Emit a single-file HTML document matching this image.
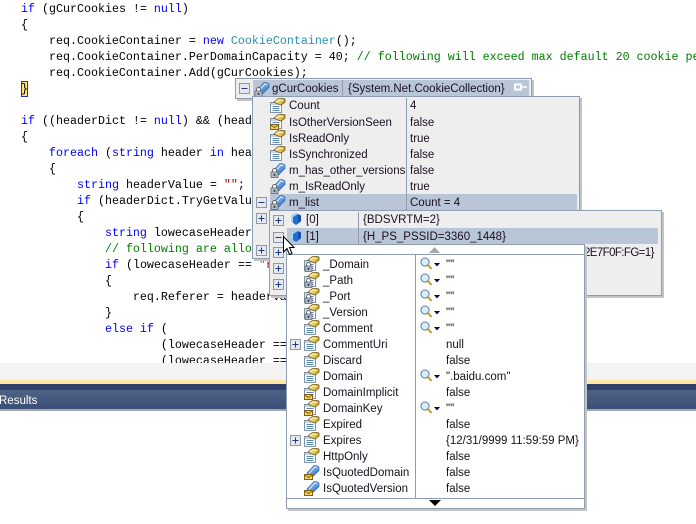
<!DOCTYPE html>
<html><head><meta charset="utf-8">
<style>
html,body{margin:0;padding:0;background:#fff;width:696px;height:524px;overflow:hidden}
#root{position:relative;width:696px;height:524px;overflow:hidden;background:#fff}
.abs{position:absolute}
.code{position:absolute;left:0;top:0;width:696px;height:363px;overflow:hidden;font:11.67px/16px "Liberation Mono",monospace;color:#000;white-space:pre}
.code div{position:absolute;left:21px;height:16px;white-space:pre;margin-top:1px}
.k{color:#0000ff}.t{color:#2b91af}.c{color:#008000}.s{color:#a31515}
.box{position:absolute;background:#eeeeee;border:1px solid #8f9db2;box-sizing:border-box;box-shadow:2px 2px 0 #c4c4c4}
.tx{position:absolute;font:11.5px/16px "Liberation Sans",sans-serif;color:#1a1020;white-space:pre;height:16px;margin-top:1px}
.hl{position:absolute;background:#b9c6d8}
.ln{position:absolute;background:#8f9db2}
svg.i{position:absolute;width:16px;height:16px;overflow:visible}
svg.e{position:absolute;width:11px;height:11px}
</style></head><body><div id="root">
<svg width="0" height="0" style="position:absolute">
<defs>
<linearGradient id="bl" x1="0" y1="0" x2="1" y2="1"><stop offset="0" stop-color="#a8d0f4"/><stop offset="1" stop-color="#1d66c4"/></linearGradient>
<linearGradient id="yl" x1="0" y1="0" x2="1" y2="0"><stop offset="0" stop-color="#fff0a0"/><stop offset="1" stop-color="#d8a010"/></linearGradient>
<symbol id="prop" viewBox="0 1 16 16"><rect x="0.5" y="5.5" width="11" height="10" fill="#fff" stroke="#7f93a8"/><rect x="1" y="6" width="10" height="2" fill="#c4d4e4"/><path d="M2.5 9.5h7M2.5 11.5h7M2.5 13.5h7" stroke="#5b86b8" stroke-width="1"/><path d="M4 5L9 1l6 1v3l-4 3-3-1z" fill="url(#yl)" stroke="#6e5a18" stroke-width=".8"/><path d="M6 5l3-2 4 .5" stroke="#fff7c8" fill="none"/></symbol>
<symbol id="field" viewBox="0 0 16 16"><path d="M3 9L10 1.500h2.500L15 3v3.500L8 13.500 5 13z" fill="url(#bl)" stroke="#2a5fa8" stroke-width=".6"/><path d="M5 9.500l6-6.500 2.500 1" stroke="#d8ecff" fill="none"/></symbol>
<symbol id="lock" viewBox="0 0 16 16"><path d="M2.500 10V8.500a2 2 0 0 1 4 0V10" stroke="#666" fill="#fff"/><rect x="1" y="10" width="7" height="5.500" fill="#b5bcc6" stroke="#5d6670" stroke-width=".8"/><rect x="3.500" y="11.800" width="2" height="2" fill="#39424c"/></symbol>
<symbol id="env" viewBox="0 0 16 16"><rect x="0.500" y="10.500" width="8" height="5" fill="#f4d060" stroke="#80641a"/><path d="M1 11l3.500 2.500L8 11" stroke="#80641a" fill="none"/></symbol>
<symbol id="cube" viewBox="0 0 16 16"><path d="M8 2l5 2.500v6L8 14 3 10.500v-6z" fill="#1f6ed0"/><path d="M3 4.500L8 2l2 1-5 3v6l-2-1.500z" fill="#a8d4f8"/><path d="M10 3.500l3 1v5l-3 2.500z" fill="#0f50a8"/></symbol>
<symbol id="plus" viewBox="0 0 11 11"><rect x=".5" y=".5" width="10" height="10" fill="#e6e8ee" stroke="#8d99a8"/><path d="M2.500 5.500h6M5.500 2.500v6" stroke="#1f3a80"/></symbol>
<symbol id="minus" viewBox="0 0 11 11"><rect x=".5" y=".5" width="10" height="10" fill="#e6e8ee" stroke="#8d99a8"/><path d="M2.500 5.500h6" stroke="#1f3a80"/></symbol>
<symbol id="mag" viewBox="0 0 22 16"><circle cx="6" cy="6" r="4" fill="#dcefff" stroke="#7b96b4" stroke-width="1.300"/><path d="M9 9l3.500 4" stroke="#c59a2a" stroke-width="2"/><path d="M15 7h6l-3 3.500z" fill="#00007e"/></symbol>
</defs>
</svg>

<div class="code">
<div style="top:0"><span class="k">if</span> (gCurCookies != <span class="k">null</span>)</div>
<div style="top:16px">{</div>
<div style="top:32px">    req.CookieContainer = <span class="k">new</span> <span class="t">CookieContainer</span>();</div>
<div style="top:48px">    req.CookieContainer.PerDomainCapacity = 40; <span class="c">// following will exceed max default 20 cookie per domain</span></div>
<div style="top:64px">    req.CookieContainer.Add(gCurCookies);</div>
<div style="top:80px;left:21px;width:7px;background:#ffe780;outline:1px solid #2030d0;outline-offset:-1px;height:16px">}</div>
<div style="top:112px"><span class="k">if</span> ((headerDict != <span class="k">null</span>) &amp;&amp; (headerDict.Count &gt; 0))</div>
<div style="top:128px">{</div>
<div style="top:144px">    <span class="k">foreach</span> (<span class="k">string</span> header <span class="k">in</span> headerDict.Keys)</div>
<div style="top:160px">    {</div>
<div style="top:176px">        <span class="k">string</span> headerValue = <span class="s">""</span>;</div>
<div style="top:192px">        <span class="k">if</span> (headerDict.TryGetValue(header, <span class="k">out</span> headerValue))</div>
<div style="top:208px">        {</div>
<div style="top:224px">            <span class="k">string</span> lowecaseHeader = header.ToLower();</div>
<div style="top:240px">            <span class="c">// following are allowed</span></div>
<div style="top:256px">            <span class="k">if</span> (lowecaseHeader == <span class="s">"referer"</span>)</div>
<div style="top:272px">            {</div>
<div style="top:288px">                req.Referer = headerValue;</div>
<div style="top:304px">            }</div>
<div style="top:320px">            <span class="k">else if</span> (</div>
<div style="top:336px">                    (lowecaseHeader == <span class="s">"a"</span>)</div>
<div style="top:352px">                    (lowecaseHeader == <span class="s">"b"</span>)</div>
</div>

<div class="abs" style="left:0;top:363px;width:696px;height:17px;background:#f3f3f3"></div>
<div class="abs" style="left:0;top:380px;width:696px;height:4px;background:#ffe8a6"></div>
<div class="abs" style="left:0;top:384px;width:696px;height:6px;background:#2f4169"></div>
<div class="abs" style="left:0;top:390px;width:696px;height:19px;background:linear-gradient(#4f6286,#3b5077)"></div>
<div class="abs" style="left:0;top:409px;width:696px;height:2px;background:#a6a6a6"></div>
<div class="tx" style="left:-1px;top:392px;color:#fff">Results</div>

<!-- popup 1 header -->
<div class="box" style="left:235px;top:78px;width:297px;height:21px"></div>
<div class="hl" style="left:253px;top:80px;width:276px;height:17px"></div>
<div class="ln" style="left:342px;top:80px;width:1px;height:17px"></div>
<svg class="e" style="left:239px;top:83px"><use href="#minus"/></svg>
<svg class="i" style="left:254px;top:81px"><use href="#field"/></svg>
<svg class="i" style="left:254px;top:81px"><use href="#lock"/></svg>
<div class="tx" style="left:272px;top:80px">gCurCookies</div>
<div class="tx" style="left:348px;top:80px">{System.Net.CookieCollection}</div>
<svg class="abs" style="left:514px;top:83px" width="13" height="10"><rect x="1" y="1.500" width="6" height="5" fill="none" stroke="#fff" stroke-width="2"/><path d="M8 4h5" stroke="#fff" stroke-width="1.500"/></svg>

<!-- popup 1 list -->
<div class="box" style="left:252px;top:96px;width:328px;height:163px"></div>
<div class="ln" style="left:406px;top:98px;width:1px;height:112px"></div>
<div class="hl" style="left:270px;top:194px;width:307px;height:16px"></div>
<div class="ln" style="left:406px;top:194px;width:1px;height:16px"></div>

<svg class="i" style="left:270px;top:98px"><use href="#prop"/></svg><div class="tx" style="left:289px;top:97px">Count</div><div class="tx" style="left:410px;top:97px">4</div>
<svg class="i" style="left:270px;top:114px"><use href="#prop"/></svg><svg class="i" style="left:270px;top:114px"><use href="#env"/></svg><div class="tx" style="left:289px;top:114px">IsOtherVersionSeen</div><div class="tx" style="left:410px;top:114px">false</div>
<svg class="i" style="left:270px;top:130px"><use href="#prop"/></svg><div class="tx" style="left:289px;top:130px">IsReadOnly</div><div class="tx" style="left:410px;top:130px">true</div>
<svg class="i" style="left:270px;top:146px"><use href="#prop"/></svg><div class="tx" style="left:289px;top:146px">IsSynchronized</div><div class="tx" style="left:410px;top:146px">false</div>
<svg class="i" style="left:270px;top:162px"><use href="#field"/></svg><svg class="i" style="left:270px;top:162px"><use href="#lock"/></svg><div class="tx" style="left:289px;top:162px">m_has_other_versions</div><div class="tx" style="left:410px;top:162px">false</div>
<svg class="i" style="left:270px;top:178px"><use href="#field"/></svg><svg class="i" style="left:270px;top:178px"><use href="#lock"/></svg><div class="tx" style="left:289px;top:178px">m_IsReadOnly</div><div class="tx" style="left:410px;top:178px">true</div>
<svg class="e" style="left:256px;top:197px"><use href="#minus"/></svg>
<svg class="i" style="left:270px;top:194px"><use href="#field"/></svg><svg class="i" style="left:270px;top:194px"><use href="#lock"/></svg><div class="tx" style="left:289px;top:194px">m_list</div><div class="tx" style="left:410px;top:194px">Count = 4</div>
<svg class="e" style="left:256px;top:213px"><use href="#plus"/></svg>
<svg class="e" style="left:256px;top:245px"><use href="#plus"/></svg>

<!-- popup 2 -->
<div class="box" style="left:269px;top:210px;width:393px;height:86px"></div>
<div class="hl" style="left:287px;top:228px;width:371px;height:16px"></div>
<div class="ln" style="left:358px;top:212px;width:1px;height:32px"></div>
<svg class="e" style="left:273px;top:215px"><use href="#plus"/></svg>
<svg class="i" style="left:288px;top:211px"><use href="#cube"/></svg>
<div class="tx" style="left:306px;top:211px">[0]</div><div class="tx" style="left:363px;top:211px">{BDSVRTM=2}</div>
<svg class="e" style="left:273px;top:232px"><use href="#minus"/></svg>
<svg class="i" style="left:288px;top:228px"><use href="#cube"/></svg>
<div class="tx" style="left:306px;top:228px">[1]</div><div class="tx" style="left:363px;top:228px">{H_PS_PSSID=3360_1448}</div>
<div class="tx" style="left:584px;top:244px;letter-spacing:-.6px">2E7F0F:FG=1}</div>
<svg class="e" style="left:273px;top:247px"><use href="#plus"/></svg>
<svg class="e" style="left:273px;top:263px"><use href="#plus"/></svg>
<svg class="e" style="left:273px;top:279px"><use href="#plus"/></svg>

<!-- popup 3 -->
<div class="box" style="left:286px;top:244px;width:299px;height:265px;background:#fff"></div>
<div class="ln" style="left:287px;top:254px;width:297px;height:1px"></div>
<div class="ln" style="left:287px;top:498px;width:297px;height:1px"></div>
<div class="ln" style="left:415px;top:255px;width:1px;height:243px"></div>
<svg class="abs" style="left:429px;top:247px" width="11" height="6"><path d="M0 6L5.500 0 11 6z" fill="#a8a8a8"/></svg>
<svg class="abs" style="left:429px;top:500px" width="12" height="6"><path d="M0 0h12L6 6z" fill="#000"/></svg>

<svg class="i" style="left:304px;top:256px"><use href="#prop"/></svg><svg class="i" style="left:304px;top:256px"><use href="#lock"/></svg><div class="tx" style="left:323px;top:256px">_Domain</div>
<svg class="abs" style="left:419px;top:256px" width="22" height="16"><use href="#mag"/></svg><div class="tx" style="left:446px;top:256px">""</div>
<svg class="i" style="left:304px;top:272px"><use href="#prop"/></svg><svg class="i" style="left:304px;top:272px"><use href="#lock"/></svg><div class="tx" style="left:323px;top:272px">_Path</div>
<svg class="abs" style="left:419px;top:272px" width="22" height="16"><use href="#mag"/></svg><div class="tx" style="left:446px;top:272px">""</div>
<svg class="i" style="left:304px;top:288px"><use href="#prop"/></svg><svg class="i" style="left:304px;top:288px"><use href="#lock"/></svg><div class="tx" style="left:323px;top:288px">_Port</div>
<svg class="abs" style="left:419px;top:288px" width="22" height="16"><use href="#mag"/></svg><div class="tx" style="left:446px;top:288px">""</div>
<svg class="i" style="left:304px;top:304px"><use href="#prop"/></svg><svg class="i" style="left:304px;top:304px"><use href="#lock"/></svg><div class="tx" style="left:323px;top:304px">_Version</div>
<svg class="abs" style="left:419px;top:304px" width="22" height="16"><use href="#mag"/></svg><div class="tx" style="left:446px;top:304px">""</div>
<svg class="i" style="left:304px;top:320px"><use href="#prop"/></svg><div class="tx" style="left:323px;top:320px">Comment</div>
<svg class="abs" style="left:419px;top:320px" width="22" height="16"><use href="#mag"/></svg><div class="tx" style="left:446px;top:320px">""</div>
<svg class="e" style="left:290px;top:339px"><use href="#plus"/></svg>
<svg class="i" style="left:304px;top:336px"><use href="#prop"/></svg><div class="tx" style="left:323px;top:336px">CommentUri</div><div class="tx" style="left:446px;top:336px">null</div>
<svg class="i" style="left:304px;top:352px"><use href="#prop"/></svg><div class="tx" style="left:323px;top:352px">Discard</div><div class="tx" style="left:446px;top:352px">false</div>
<svg class="i" style="left:304px;top:368px"><use href="#prop"/></svg><div class="tx" style="left:323px;top:368px">Domain</div>
<svg class="abs" style="left:419px;top:368px" width="22" height="16"><use href="#mag"/></svg><div class="tx" style="left:446px;top:368px">".baidu.com"</div>
<svg class="i" style="left:304px;top:384px"><use href="#prop"/></svg><svg class="i" style="left:304px;top:384px"><use href="#env"/></svg><div class="tx" style="left:323px;top:384px">DomainImplicit</div><div class="tx" style="left:446px;top:384px">false</div>
<svg class="i" style="left:304px;top:400px"><use href="#prop"/></svg><svg class="i" style="left:304px;top:400px"><use href="#env"/></svg><div class="tx" style="left:323px;top:400px">DomainKey</div>
<svg class="abs" style="left:419px;top:400px" width="22" height="16"><use href="#mag"/></svg><div class="tx" style="left:446px;top:400px">""</div>
<svg class="i" style="left:304px;top:416px"><use href="#prop"/></svg><div class="tx" style="left:323px;top:416px">Expired</div><div class="tx" style="left:446px;top:416px">false</div>
<svg class="e" style="left:290px;top:435px"><use href="#plus"/></svg>
<svg class="i" style="left:304px;top:432px"><use href="#prop"/></svg><div class="tx" style="left:323px;top:432px">Expires</div><div class="tx" style="left:446px;top:432px">{12/31/9999 11:59:59 PM}</div>
<svg class="i" style="left:304px;top:448px"><use href="#prop"/></svg><div class="tx" style="left:323px;top:448px">HttpOnly</div><div class="tx" style="left:446px;top:448px">false</div>
<svg class="i" style="left:304px;top:464px"><use href="#field"/></svg><svg class="i" style="left:304px;top:464px"><use href="#env"/></svg><div class="tx" style="left:323px;top:464px">IsQuotedDomain</div><div class="tx" style="left:446px;top:464px">false</div>
<svg class="i" style="left:304px;top:480px"><use href="#field"/></svg><svg class="i" style="left:304px;top:480px"><use href="#env"/></svg><div class="tx" style="left:323px;top:480px">IsQuotedVersion</div><div class="tx" style="left:446px;top:480px">false</div>

<!-- cursor -->
<svg class="abs" style="left:283px;top:236px" width="14" height="21"><path d="M0.500 0.500V16l3.500-3.500 2.500 6 2.500-1-2.500-6H11z" fill="#fff" stroke="#000"/></svg>
</div></body></html>
